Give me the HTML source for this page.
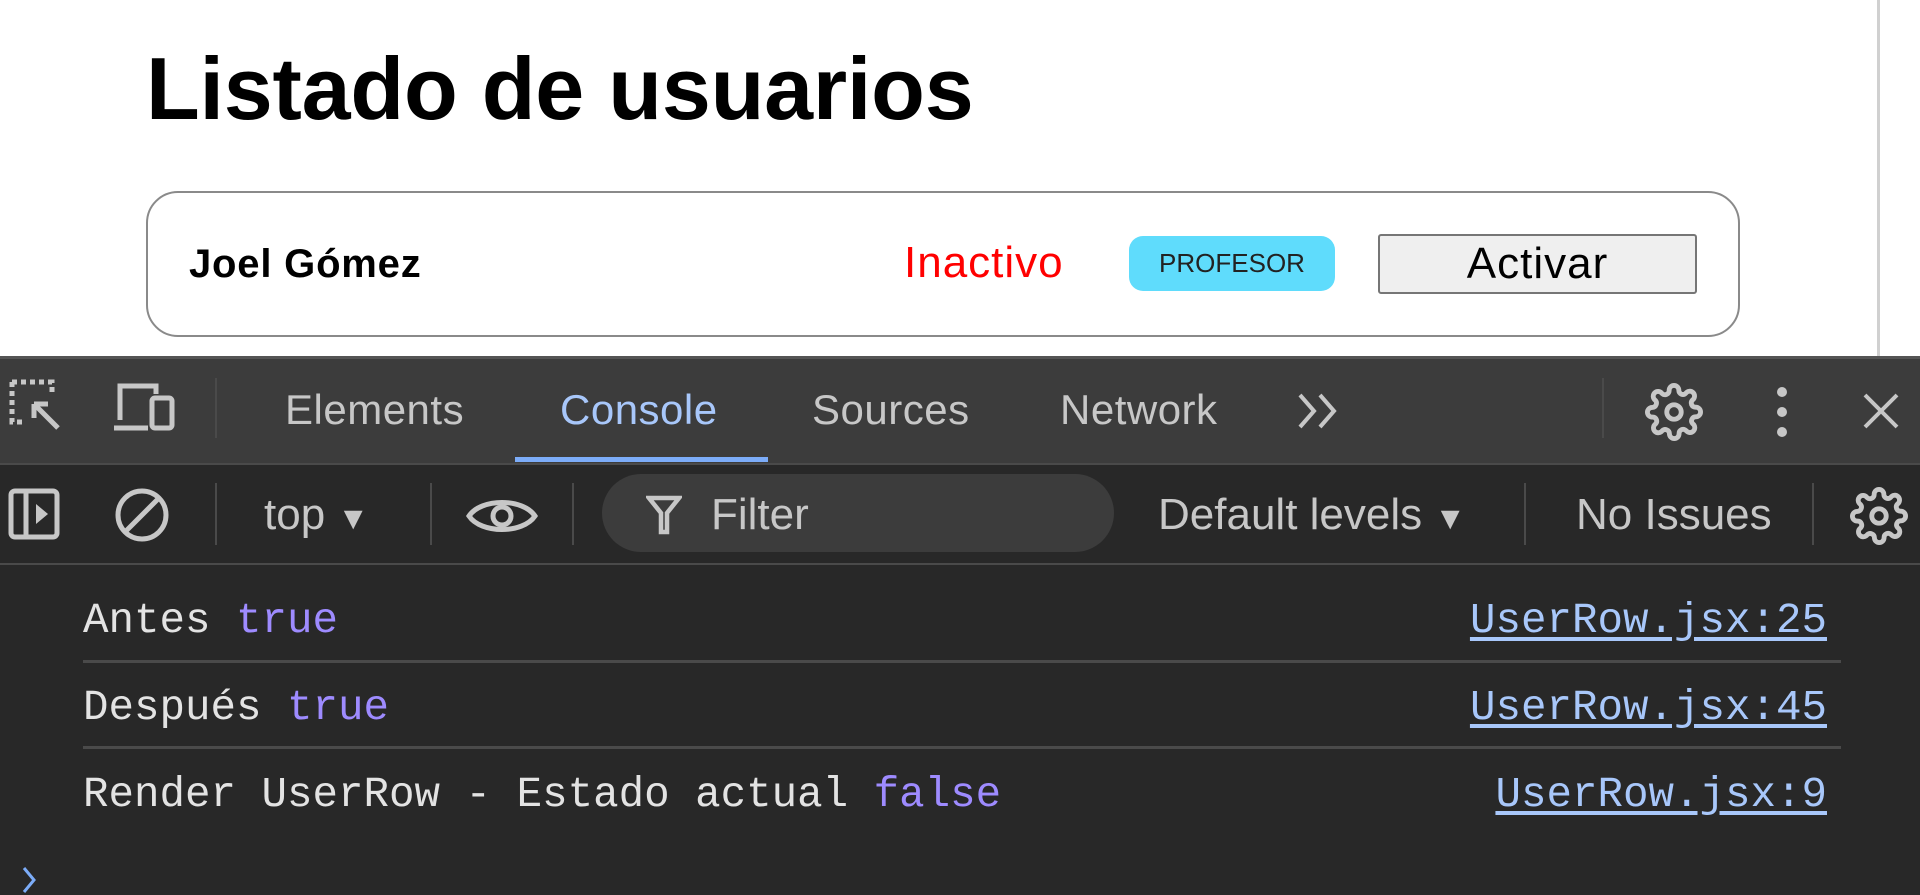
<!DOCTYPE html>
<html><head><meta charset="utf-8"><style>
*{margin:0;padding:0;box-sizing:border-box}
body{width:1920px;height:895px;overflow:hidden;background:#fff;position:relative;font-family:"Liberation Sans",sans-serif}
.a{position:absolute;white-space:nowrap}
.tab{position:absolute;top:386px;font-size:42px;color:#c7c7c7;line-height:48px;letter-spacing:0.5px}
.t2{position:absolute;top:490px;font-size:44px;color:#c7c7c7;line-height:50px}
.sep{position:absolute;width:2px;background:#4a4a4a}
.mono{font-family:"Liberation Mono",monospace;font-size:42.5px;color:#e3e3e3;line-height:50px}
.v{color:#9e8bff}
.lnk{color:#a8c7fa;text-decoration:underline;text-underline-offset:5px}
.hr{position:absolute;left:83px;width:1758px;height:3px;background:#4a4a4a}
</style></head><body>
<div class="a" style="left:146px;top:34px;font-size:88px;font-weight:bold;letter-spacing:-0.2px;color:#000;line-height:110px">Listado de usuarios</div>
<div class="a" style="left:146px;top:191px;width:1594px;height:146px;border:2px solid #8a8a8a;border-radius:32px"></div>
<div class="a" style="left:189px;top:241px;font-size:40px;font-weight:bold;letter-spacing:0.8px;color:#000;line-height:46px">Joel Gómez</div>
<div class="a" style="left:904px;top:238px;font-size:44px;letter-spacing:1px;color:#f00;line-height:50px">Inactivo</div>
<div class="a" style="left:1129px;top:236px;width:206px;height:55px;background:#5fdcfc;border-radius:14px;font-size:26px;color:#222;text-align:center;line-height:55px">PROFESOR</div>
<div class="a" style="left:1378px;top:234px;width:319px;height:60px;background:#efefef;border:2px solid #767676;border-radius:3px;font-size:44px;letter-spacing:1px;color:#000;text-align:center;line-height:56px">Activar</div>
<div class="a" style="left:1877px;top:0;width:3px;height:356px;background:#d0d0d0"></div>

<div class="a" style="left:0;top:356px;width:1920px;height:107px;background:#3c3c3c;border-top:3px solid #555"></div>
<svg class="a" style="left:8px;top:378px" width="60" height="60" viewBox="0 0 60 60" fill="none" stroke="#c7c7c7" stroke-width="5"><path d="M4 4h40v14M4 4v40h14" stroke-dasharray="5 4"/><path d="M26 26l24 24M26 26h14M26 26v14"/></svg>
<svg class="a" style="left:112px;top:382px" width="64" height="54" viewBox="0 0 64 54" fill="none" stroke="#c7c7c7" stroke-width="5"><path d="M8 38V4h36v8M2 46h34"/><rect x="40" y="16" width="20" height="30" rx="3"/></svg>
<div class="sep" style="left:215px;top:378px;height:60px"></div>
<div class="tab" style="left:285px">Elements</div>
<div class="tab" style="left:560px;color:#a8c7fa">Console</div>
<div class="a" style="left:515px;top:457px;width:253px;height:5px;background:#7cacf8"></div>
<div class="tab" style="left:812px">Sources</div>
<div class="tab" style="left:1060px">Network</div>
<svg class="a" style="left:1296px;top:392px" width="46" height="38" viewBox="0 0 46 38" fill="none" stroke="#c7c7c7" stroke-width="4"><path d="M4 3l14 16-14 16M24 3l14 16-14 16"/></svg>
<div class="sep" style="left:1602px;top:378px;height:60px"></div>
<svg class="a" style="left:1645px;top:383px" width="58" height="58" viewBox="0 0 24 24" fill="none" stroke="#c7c7c7" stroke-width="2"><circle cx="12" cy="12" r="3"/><path d="M19.4 15a1.7 1.7 0 0 0 .3 1.8l.1.1a2 2 0 1 1-2.8 2.8l-.1-.1a1.7 1.7 0 0 0-1.8-.3 1.7 1.7 0 0 0-1 1.5V21a2 2 0 1 1-4 0v-.1a1.7 1.7 0 0 0-1.1-1.5 1.7 1.7 0 0 0-1.8.3l-.1.1a2 2 0 1 1-2.8-2.8l.1-.1a1.7 1.7 0 0 0 .3-1.8 1.7 1.7 0 0 0-1.5-1H3a2 2 0 1 1 0-4h.1a1.7 1.7 0 0 0 1.5-1.1 1.7 1.7 0 0 0-.3-1.8l-.1-.1a2 2 0 1 1 2.8-2.8l.1.1a1.7 1.7 0 0 0 1.8.3H9a1.7 1.7 0 0 0 1-1.5V3a2 2 0 1 1 4 0v.1a1.7 1.7 0 0 0 1 1.5 1.7 1.7 0 0 0 1.8-.3l.1-.1a2 2 0 1 1 2.8 2.8l-.1.1a1.7 1.7 0 0 0-.3 1.8V9a1.7 1.7 0 0 0 1.5 1H21a2 2 0 1 1 0 4h-.1a1.7 1.7 0 0 0-1.5 1z"/></svg>
<svg class="a" style="left:1774px;top:384px" width="16" height="56" viewBox="0 0 16 56" fill="#c7c7c7"><circle cx="8" cy="8" r="5"/><circle cx="8" cy="28" r="5"/><circle cx="8" cy="48" r="5"/></svg>
<svg class="a" style="left:1862px;top:392px" width="38" height="38" viewBox="0 0 38 38" stroke="#c7c7c7" stroke-width="4"><path d="M3 3l32 32M35 3L3 35"/></svg>

<div class="a" style="left:0;top:463px;width:1920px;height:432px;background:#282828;border-top:2px solid #4a4a4a"></div>
<div class="a" style="left:0;top:563px;width:1920px;height:2px;background:#4a4a4a"></div>
<svg class="a" style="left:8px;top:488px" width="52" height="52" viewBox="0 0 52 52" fill="none" stroke="#c7c7c7" stroke-width="5"><rect x="3" y="3" width="46" height="46" rx="4"/><path d="M18 3v46"/><path d="M28 16l12 10-12 10z" fill="#c7c7c7" stroke="none"/></svg>
<svg class="a" style="left:114px;top:487px" width="56" height="56" viewBox="0 0 56 56" fill="none" stroke="#c7c7c7" stroke-width="5"><circle cx="28" cy="28" r="24"/><path d="M12 44L44 12"/></svg>
<div class="sep" style="left:215px;top:483px;height:62px"></div>
<div class="t2" style="left:264px">top <span style="font-size:32px">▼</span></div>
<div class="sep" style="left:430px;top:483px;height:62px"></div>
<svg class="a" style="left:466px;top:493px" width="72" height="46" viewBox="0 0 72 46" fill="none" stroke="#c7c7c7" stroke-width="5"><path d="M3 23C15 5 57 5 69 23 57 41 15 41 3 23z"/><circle cx="36" cy="23" r="9"/></svg>
<div class="sep" style="left:572px;top:483px;height:62px"></div>
<div class="a" style="left:602px;top:474px;width:512px;height:78px;background:#3c3c3c;border-radius:39px"></div>
<svg class="a" style="left:646px;top:495px" width="36" height="40" viewBox="0 0 36 40" fill="none" stroke="#c7c7c7" stroke-width="4.5"><path d="M3 3h30L21 18v19h-6V18z"/></svg>
<div class="t2" style="left:711px">Filter</div>
<div class="t2" style="left:1158px">Default levels <span style="font-size:32px">▼</span></div>
<div class="sep" style="left:1524px;top:483px;height:62px"></div>
<div class="t2" style="left:1576px">No Issues</div>
<div class="sep" style="left:1812px;top:483px;height:62px"></div>
<svg class="a" style="left:1850px;top:487px" width="58" height="58" viewBox="0 0 24 24" fill="none" stroke="#c7c7c7" stroke-width="2"><circle cx="12" cy="12" r="3"/><path d="M19.4 15a1.7 1.7 0 0 0 .3 1.8l.1.1a2 2 0 1 1-2.8 2.8l-.1-.1a1.7 1.7 0 0 0-1.8-.3 1.7 1.7 0 0 0-1 1.5V21a2 2 0 1 1-4 0v-.1a1.7 1.7 0 0 0-1.1-1.5 1.7 1.7 0 0 0-1.8.3l-.1.1a2 2 0 1 1-2.8-2.8l.1-.1a1.7 1.7 0 0 0 .3-1.8 1.7 1.7 0 0 0-1.5-1H3a2 2 0 1 1 0-4h.1a1.7 1.7 0 0 0 1.5-1.1 1.7 1.7 0 0 0-.3-1.8l-.1-.1a2 2 0 1 1 2.8-2.8l.1.1a1.7 1.7 0 0 0 1.8.3H9a1.7 1.7 0 0 0 1-1.5V3a2 2 0 1 1 4 0v.1a1.7 1.7 0 0 0 1 1.5 1.7 1.7 0 0 0 1.8-.3l.1-.1a2 2 0 1 1 2.8 2.8l-.1.1a1.7 1.7 0 0 0-.3 1.8V9a1.7 1.7 0 0 0 1.5 1H21a2 2 0 1 1 0 4h-.1a1.7 1.7 0 0 0-1.5 1z"/></svg>

<div class="a mono" style="left:83px;top:596px">Antes <span class="v">true</span></div>
<div class="a mono lnk" style="right:93px;top:596px">UserRow.jsx:25</div>
<div class="hr" style="top:660px"></div>
<div class="a mono" style="left:83px;top:683px">Después <span class="v">true</span></div>
<div class="a mono lnk" style="right:93px;top:683px">UserRow.jsx:45</div>
<div class="hr" style="top:746px"></div>
<div class="a mono" style="left:83px;top:770px">Render UserRow - Estado actual <span class="v">false</span></div>
<div class="a mono lnk" style="right:93px;top:770px">UserRow.jsx:9</div>
<svg class="a" style="left:20px;top:865px" width="20" height="30" viewBox="0 0 20 30" fill="none" stroke="#7cacf8" stroke-width="3"><path d="M4 3l10 12-10 12"/></svg>
</body></html>
